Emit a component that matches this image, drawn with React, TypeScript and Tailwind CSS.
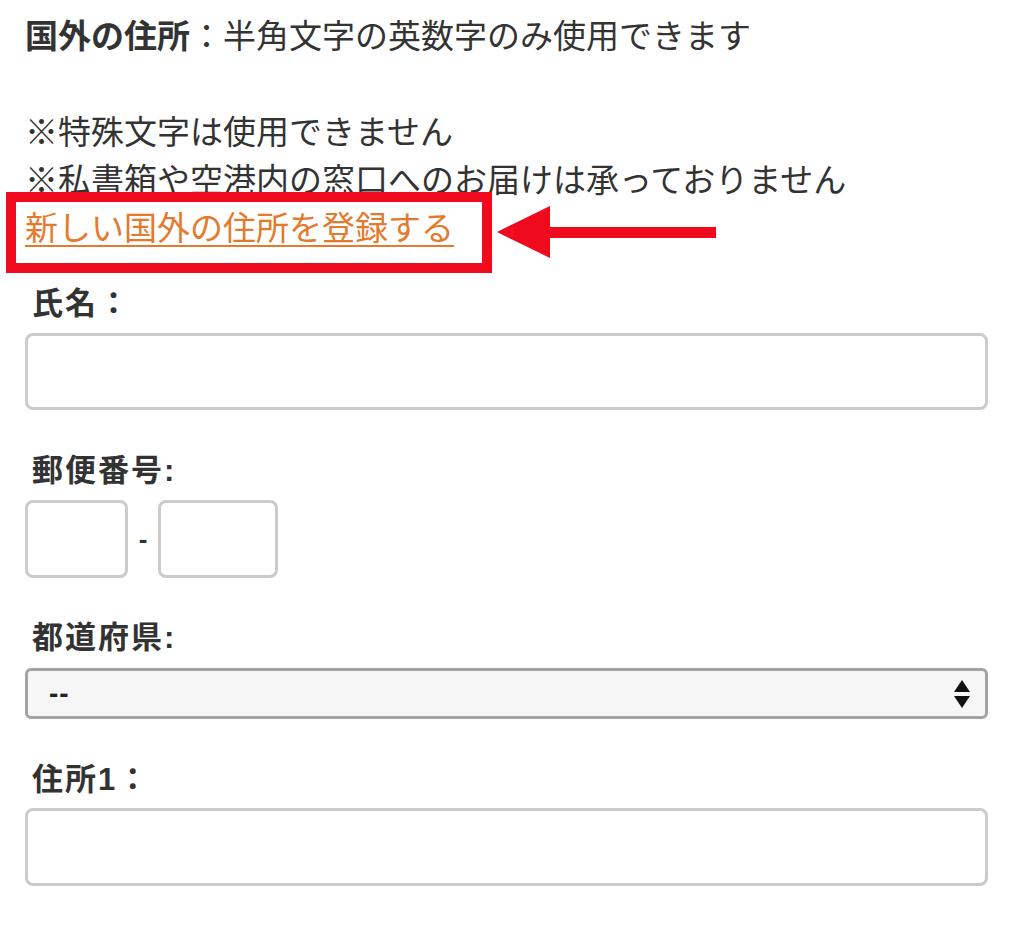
import React from 'react';

const font = { fontFamily: '"Liberation Sans", "Noto Sans CJK JP", sans-serif' };

function Label({ children }: { children: React.ReactNode }) {
  return (
    <div className="pl-[7px] text-[31px] leading-[40px] font-bold tracking-[2px] text-[#333]">
      {children}
    </div>
  );
}

function TextBox({ className }: { className: string }) {
  return (
    <input
      type="text"
      className={`block bg-white border-[3px] border-[#cbcbcb] rounded-[8px] outline-none ${className}`}
    />
  );
}

function App() {
  return (
    <div style={font} className="relative w-[1024px] h-[925px] bg-white overflow-hidden text-[#333]">
      <div className="pl-[25px] pr-[36px] pt-[13px]">
        {/* notes */}
        <div className="text-[33px] leading-[48px]">
          <p>
            <span className="font-bold">国外の住所</span>：半角文字の英数字のみ使用できます
          </p>
          <p>&nbsp;</p>
          <p>※特殊文字は使用できません</p>
          <p>※私書箱や空港内の窓口へのお届けは承っておりません</p>
          <a
            href="#"
            className="text-[#e5792c] underline decoration-2 underline-offset-[5px]"
          >
            新しい国外の住所を登録する
          </a>
        </div>

        <div className="mt-[31px]">
          <Label>氏名：</Label>
          <TextBox className="mt-[9px] w-full h-[77px]" />
        </div>

        <div className="mt-[41px]">
          <Label>郵便番号:</Label>
          <div className="mt-[9px] flex items-center">
            <TextBox className="w-[103px] h-[78px]" />
            <span className="w-[30px] text-center text-[26px] font-bold">-</span>
            <TextBox className="w-[120px] h-[78px]" />
          </div>
        </div>

        <div className="mt-[40px]">
          <Label>都道府県:</Label>
          <div className="mt-[10px] h-[51px] flex items-center justify-between pl-[21px] pr-[14px] bg-[#f6f6f6] border-[3px] border-[#a3a3a3] rounded-[6px]">
            <span className="text-[28px] font-bold text-[#222] tracking-[1px]">--</span>
            <svg width="18" height="32" viewBox="0 0 18 32">
              <polygon points="9,2 17,14 1,14" fill="#111" />
              <polygon points="1,18 17,18 9,30" fill="#111" />
            </svg>
          </div>
        </div>

        <div className="mt-[41px]">
          <Label>住所1：</Label>
          <TextBox className="mt-[8px] w-full h-[78px]" />
        </div>
      </div>

      {/* annotation: red box */}
      <div className="absolute left-[6px] top-[192px] w-[486px] h-[81px] border-[10px] border-[#ef0a1e]" />
      {/* annotation: arrow */}
      <svg className="absolute left-[495px] top-[204px]" width="224" height="56" viewBox="0 0 224 56">
        <polygon points="2,28 55,2 55,54" fill="#ef0a1e" />
        <rect x="54" y="23" width="167" height="11" fill="#ef0a1e" />
      </svg>
    </div>
  );
}

export default App;
